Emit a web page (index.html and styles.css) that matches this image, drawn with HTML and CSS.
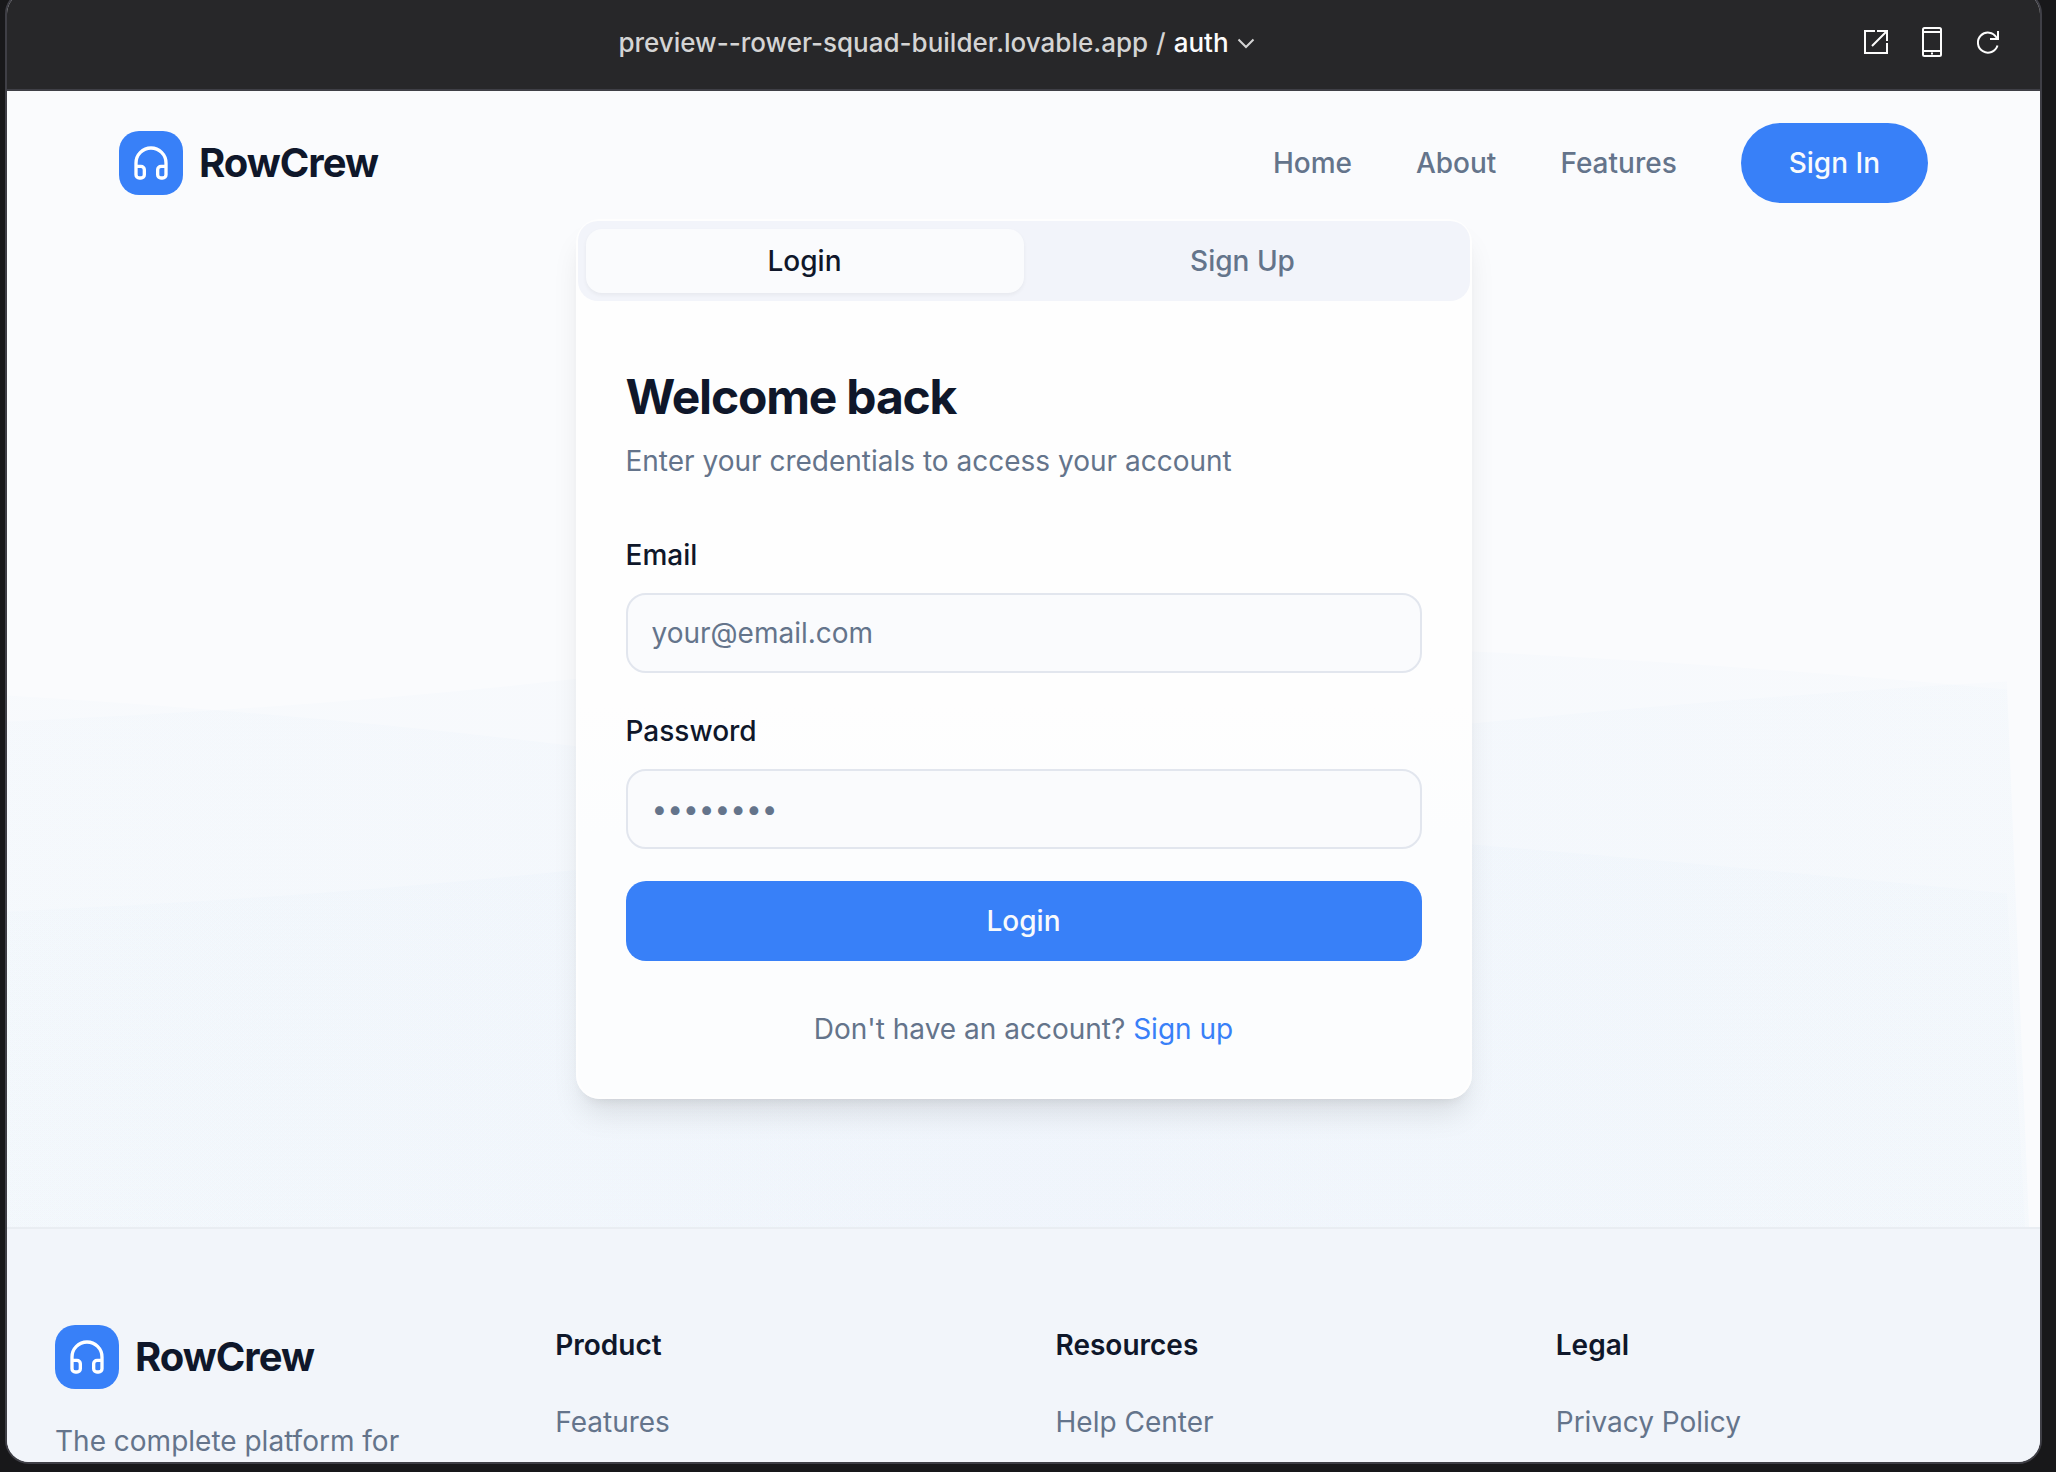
FILE: index.html
```html
<!DOCTYPE html>
<html lang="en">
<head>
<meta charset="utf-8">
<title>RowCrew</title>
<link rel="stylesheet" href="styles.css">
</head>
<body>
<div class="frame">
  <div class="toolbar">
    <button class="address" type="button"><span>preview--rower-squad-builder.lovable.app</span><span class="slash">/</span><span class="route">auth</span><svg width="18" height="18" viewBox="0 0 18 18" fill="none" stroke="currentColor" stroke-width="2"><path d="M1.500 5.500 9 13l7.500-7.500"/></svg></button>
    <div class="tools">
      <button type="button" aria-label="Open in new tab"><svg width="32" height="32" viewBox="0 0 32 32" fill="none" stroke="currentColor" stroke-width="2"><path d="M15 4H5v22h22V16M17 4h10v10M27 4 12 19"/></svg></button>
      <button type="button" aria-label="Device preview"><svg width="32" height="32" viewBox="0 0 32 32" fill="none" stroke="currentColor" stroke-width="2"><rect x="7" y="1" width="18" height="28" rx="1.500"/><path d="M7 5h18M7 24h18"/><path d="M15 26.500h2"/></svg></button>
      <button type="button" aria-label="Reload"><svg width="32" height="32" viewBox="0 0 32 32" fill="none" stroke="currentColor" stroke-width="2"><path d="M25.500 18.500a10 10 0 1 1-1-8l1 1.500"/><path d="M26 4v8h-8"/></svg></button>
    </div>
  </div>
  <div class="site">
    <svg class="waves" viewBox="0 0 2033 1372" preserveAspectRatio="none" aria-hidden="true">
      <defs>
        <linearGradient id="tint" x1="0" y1="0" x2="1" y2="0"><stop offset="0" stop-color="#3b9bdc" stop-opacity=".013"/><stop offset=".5" stop-color="#3b88e6" stop-opacity=".018"/><stop offset="1" stop-color="#3b9bdc" stop-opacity=".013"/></linearGradient>
      </defs>
      <path d="M0 631Q300 618 563 589T1465 561Q1750 575 2000 599L2022 1136 2026 1372H0z" fill="url(#tint)"/>
      <path d="M0 605Q300 623 563 655T1465 633Q1750 605 2000 591L2022 1136 2026 1372H0z" fill="url(#tint)"/>
      <path d="M0 821Q300 808 563 780T1465 754Q1750 778 2000 803L2018 1136 2022 1372H0z" fill="url(#tint)"/>
    </svg>
    <header class="header">
      <a class="brand" href="#"><span class="mark"><svg width="40" height="40" viewBox="0 0 24 24" fill="none" stroke="currentColor" stroke-width="2" stroke-linecap="round" stroke-linejoin="round"><path d="M3 14h3a2 2 0 0 1 2 2v3a2 2 0 0 1-2 2H5a2 2 0 0 1-2-2v-7a9 9 0 0 1 18 0v7a2 2 0 0 1-2 2h-1a2 2 0 0 1-2-2v-3a2 2 0 0 1 2-2h3"/></svg></span>RowCrew</a>
      <nav class="nav"><a href="#">Home</a><a href="#">About</a><a href="#">Features</a><button class="signin" type="button">Sign In</button></nav>
    </header>
    <main class="main">
      <section class="card">
        <div class="tabs" role="tablist">
          <button class="tab active" role="tab" aria-selected="true" type="button">Login</button>
          <button class="tab" role="tab" aria-selected="false" type="button">Sign Up</button>
        </div>
        <form class="form">
          <h1>Welcome back</h1>
          <p class="intro">Enter your credentials to access your account</p>
          <div class="field"><label for="email">Email</label><input id="email" type="email" placeholder="your@email.com"></div>
          <div class="field"><label for="password">Password</label><input id="password" type="password" placeholder="••••••••"></div>
          <button class="submit" type="button">Login</button>
          <p class="switch">Don't have an account? <a href="#">Sign up</a></p>
        </form>
      </section>
    </main>
    <footer class="footer">
      <div>
        <a class="brand" href="#"><span class="mark"><svg width="40" height="40" viewBox="0 0 24 24" fill="none" stroke="currentColor" stroke-width="2" stroke-linecap="round" stroke-linejoin="round"><path d="M3 14h3a2 2 0 0 1 2 2v3a2 2 0 0 1-2 2H5a2 2 0 0 1-2-2v-7a9 9 0 0 1 18 0v7a2 2 0 0 1-2 2h-1a2 2 0 0 1-2-2v-3a2 2 0 0 1 2-2h3"/></svg></span>RowCrew</a>
        <p class="blurb">The complete platform for</p>
      </div>
      <div><h2>Product</h2><ul><li><a href="#">Features</a></li></ul></div>
      <div><h2>Resources</h2><ul><li><a href="#">Help Center</a></li></ul></div>
      <div><h2>Legal</h2><ul><li><a href="#">Privacy Policy</a></li></ul></div>
    </footer>
  </div>
</div>
</body>
</html>
```
FILE: styles.css
```css
* { box-sizing: border-box; margin: 0; padding: 0; }
html, body { height: 100%; }
body { background: #18181a; font: 28px/40px Inter, sans-serif; color: #0f172a; overflow: hidden; }
button, input { font: inherit; border: 0; color: inherit; background: none; }
a { color: inherit; text-decoration: none; }
ul { list-style: none; }
svg { display: block; }

.frame { display: flex; flex-direction: column; height: calc(100vh + 2px); margin: -10px 14px 8px 5px; border: 2px solid #3f3f46; border-radius: 24px; overflow: hidden; background: #fafbfd; }

.toolbar { display: grid; grid-template-columns: 1fr auto 1fr; align-items: center; flex: none; height: 99px; padding: 4px 36px 0 0; border-bottom: 2px solid #3f3f46; background: #272729; color: #fcfcfc; }
.address { grid-column: 2; display: flex; align-items: center; gap: 8px; margin-right: 138px; font-size: 26px; font-weight: 500; color: #d4d4d4; }
.route { color: #fcfcfc; }
.tools { display: flex; justify-content: flex-end; gap: 24px; }

.site { position: relative; flex: 1; display: flex; flex-direction: column; min-height: 0; overflow: hidden; }
.waves { position: absolute; inset: 0; width: 100%; height: 100%; }

.header { position: relative; display: flex; justify-content: space-between; align-items: center; padding: 32px 112px 16px; }
.brand { display: flex; align-items: center; gap: 16px; font-size: 40px; line-height: 56px; font-weight: 700; letter-spacing: -0.025em; }
.mark { display: grid; place-items: center; width: 64px; height: 64px; border-radius: 20px; background: #3880f8; color: #fff; }
.nav { display: flex; align-items: center; gap: 64px; font-weight: 500; color: #64748b; }
.signin { height: 80px; padding: 0 48px; border-radius: 40px; background: #3880f8; color: #f8fafc; font-weight: 500; }

.main { position: relative; display: flex; justify-content: center; padding-bottom: 128px; }
.card { width: 896px; border: 2px solid #fefefe; border-radius: 24px; background: linear-gradient(#fefefe 55%, #fcfdfe 70%); box-shadow: 0 20px 30px -6px rgba(0, 0, 0, .1), 0 8px 12px -8px rgba(0, 0, 0, .1); }
.tabs { display: grid; grid-template-columns: 1fr 1fr; padding: 8px; border-radius: 20px; background: #f2f4fa; }
.tab { height: 64px; border-radius: 16px; font-weight: 500; color: #64748b; }
.tab.active { background: #fafbfd; color: #0f172a; box-shadow: 0 2px 4px rgba(0, 0, 0, .05); }

.form { display: flex; flex-direction: column; padding: 64px 48px 48px; }
h1 { font-size: 48px; line-height: 64px; font-weight: 700; letter-spacing: -0.025em; }
.intro { margin: 12px 0 16px; color: #64748b; }
.field { display: flex; flex-direction: column; gap: 12px; margin-top: 32px; }
.field label { line-height: 52px; font-weight: 500; }
.field input { width: 100%; height: 80px; padding: 0 24px; border: 2px solid #e2e6ee; border-radius: 20px; background: #fafbfd; }
.field input::placeholder { color: #64748b; opacity: 1; }
.submit { height: 80px; margin-top: 32px; border-radius: 20px; background: #3880f8; color: #f8fafc; font-weight: 500; }
.switch { margin-top: 48px; text-align: center; color: #64748b; }
.switch a { color: #3880f8; }

.footer { position: relative; flex: 1; display: grid; grid-template-columns: repeat(4, 1fr); gap: 64px; padding: 96px 48px 0; border-top: 2px solid #e9edf2; background: #f2f5fa; }
.blurb { margin-top: 32px; color: #64748b; }
h2 { font-size: 28px; line-height: 40px; font-weight: 600; margin-bottom: 32px; }
.footer li { font-size: 32px; line-height: 48px; }
.footer li a { font-size: 28px; color: #64748b; }
```
